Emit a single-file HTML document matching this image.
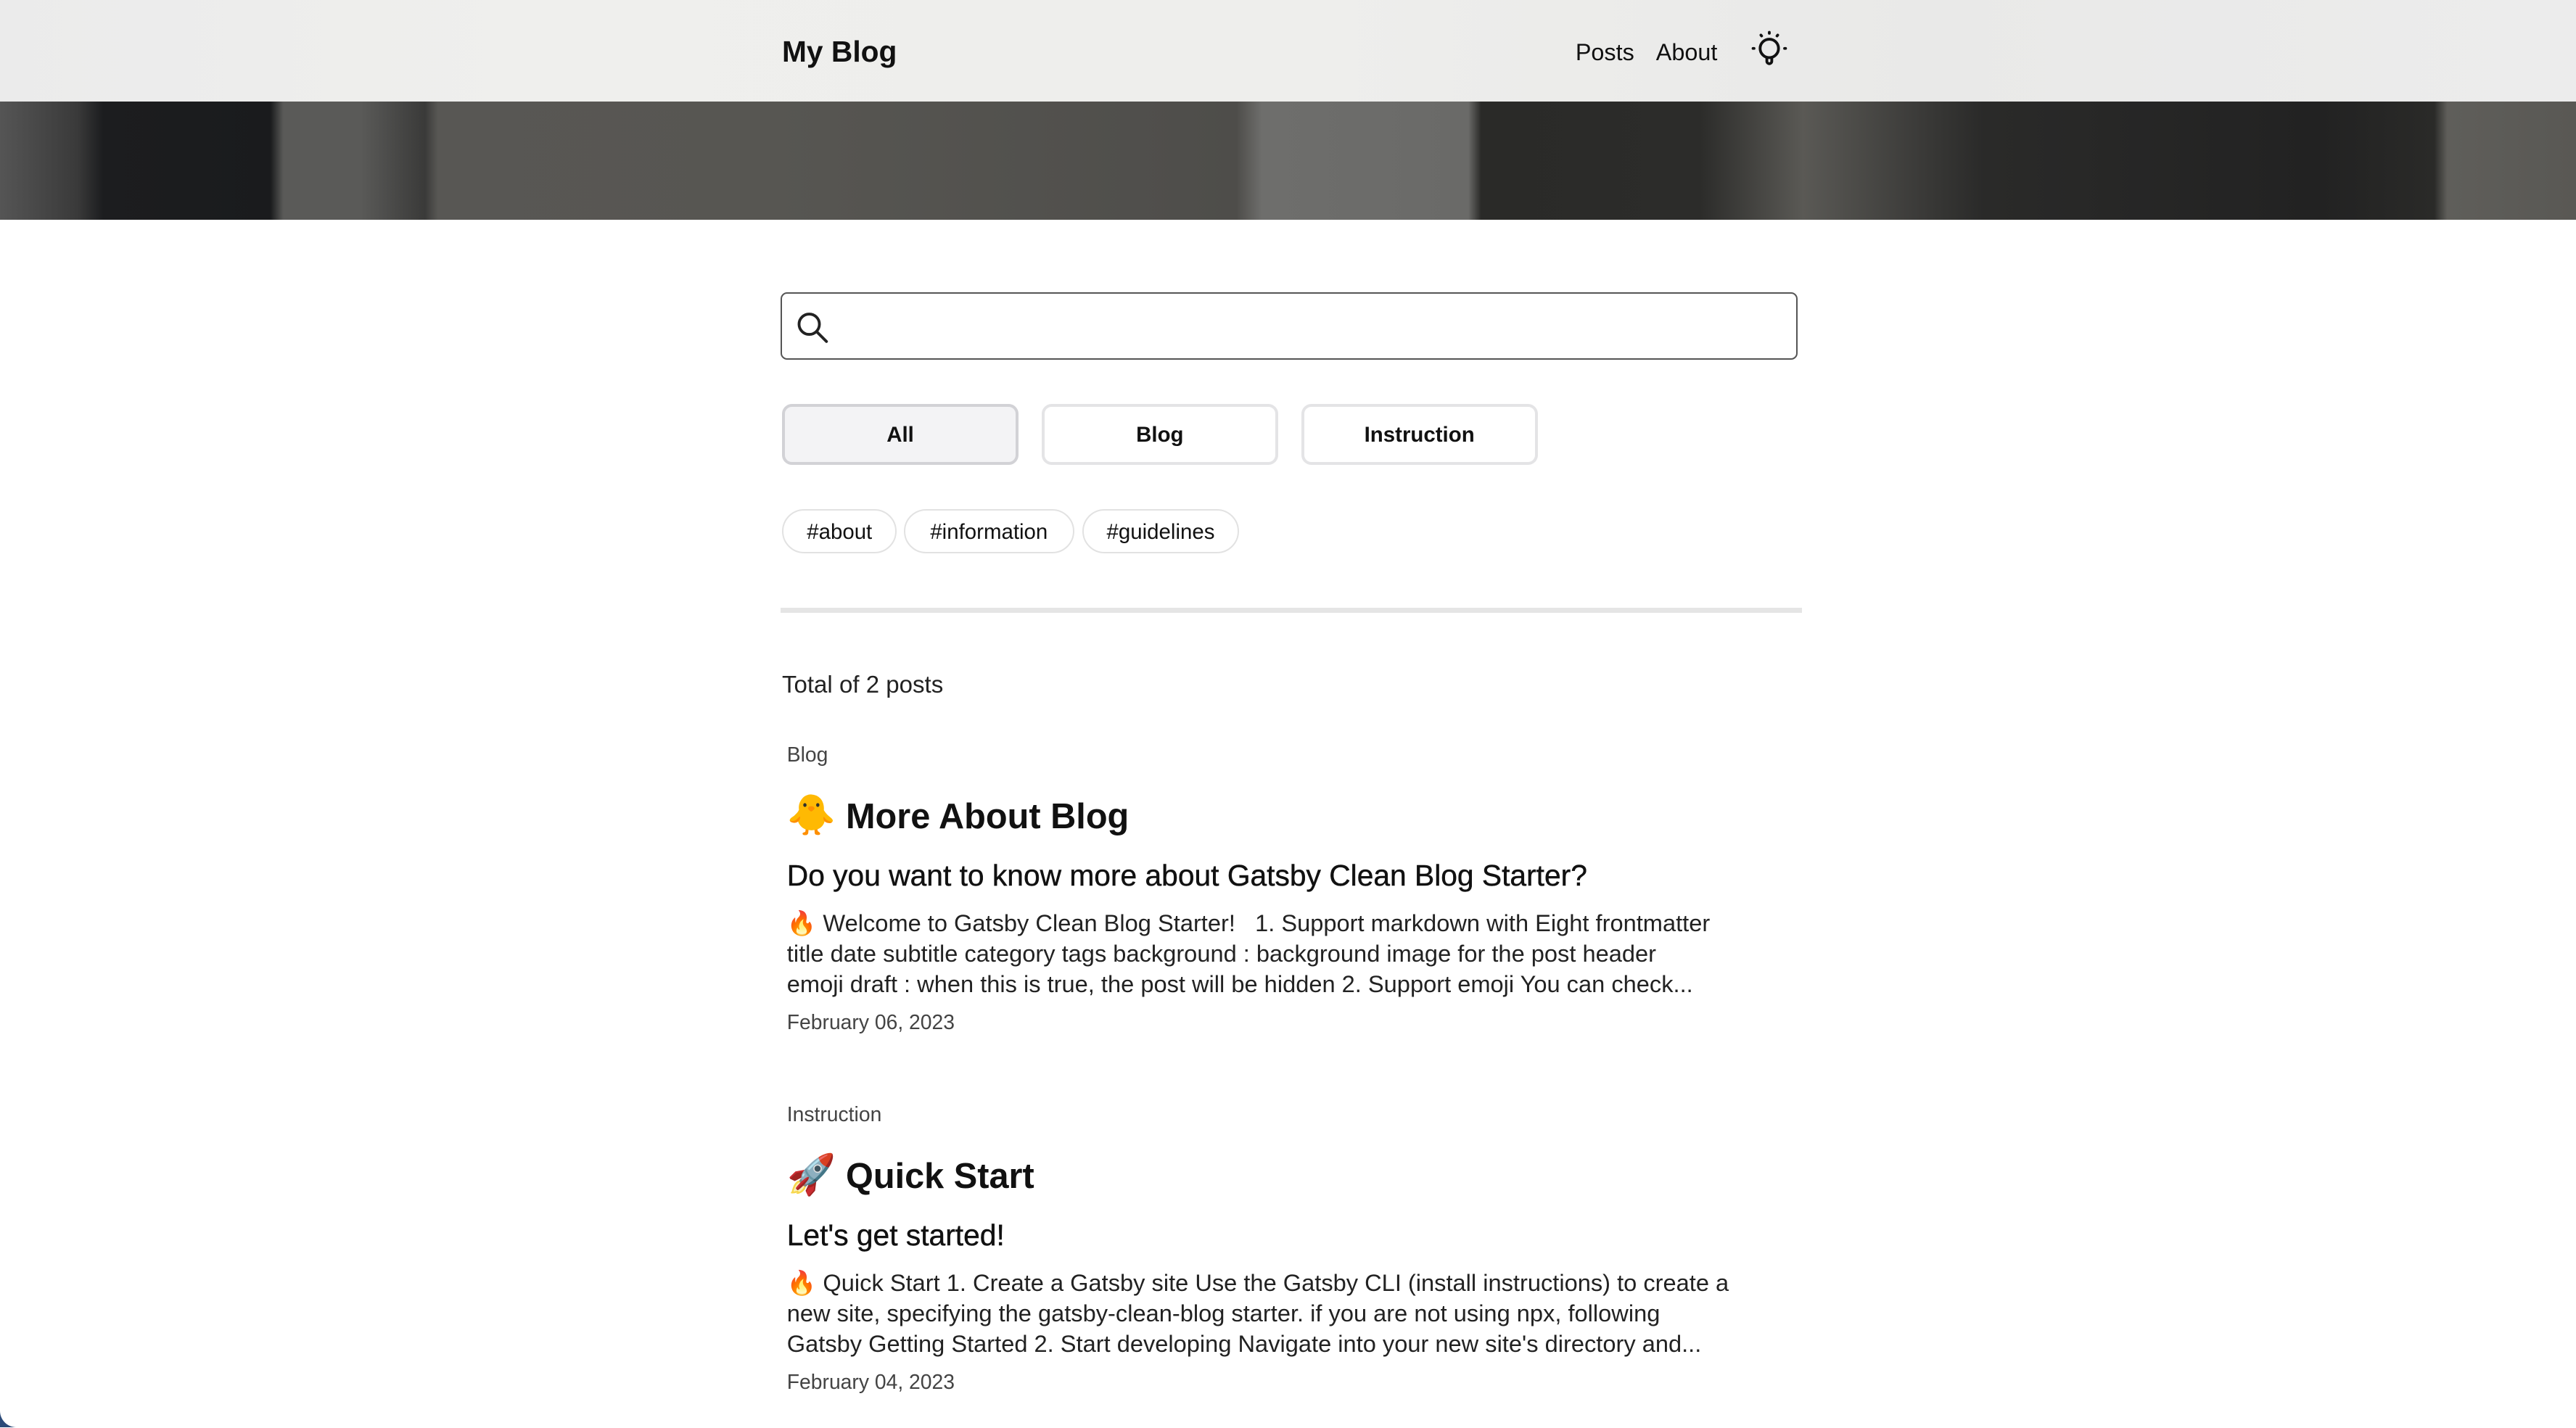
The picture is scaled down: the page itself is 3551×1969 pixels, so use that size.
<!DOCTYPE html>
<html><head><meta charset="utf-8">
<style>
html,body{margin:0;padding:0;background:#fff;overflow:hidden}
body{width:1568px;height:869px;zoom:2.26467;position:relative;font-family:"Liberation Sans","DejaVu Sans",sans-serif;color:#111}
.abs{position:absolute}
#hdr{left:0;top:0;width:1568px;height:62px;background:linear-gradient(90deg,#ebebeb 0%,#efefed 20%,#eeeeec 50%,#e9e9e8 75%,#ececec 100%);}
#hero{left:0;top:62px;width:1568px;height:72px;background:
linear-gradient(90deg,#555 0,#3a3a3a 3%,#1c1d1f 4%,#1a1b1d 10.5%,#5a5a58 11%,#5a5a58 14%,#3a3a39 16.5%,#585754 17%,#575652 30%,#4e4d4a 48%,#6e6e6c 49%,#6a6a68 57%,#2a2a28 57.5%,#2c2c2a 66%,#5a5955 70%,#2a2a29 77%,#222 90%,#2a2a28 94.5%,#5f5e5a 95%,#595854 100%);}
.btn{top:246px;height:37px;width:144px;border:2px solid #e4e4e6;border-radius:6px;box-sizing:border-box;font-size:13px;font-weight:bold;display:flex;align-items:center;justify-content:center;background:#fff;padding-top:1px}
.tag{top:310px;height:27px;border:1px solid #e2e2e2;border-radius:14px;box-sizing:border-box;font-size:13px;display:flex;align-items:center;justify-content:center;background:#fff;padding-top:1px}
.cat{font-size:12.5px;color:#444}
.ttl{font-size:21.5px;font-weight:600;color:#111;white-space:nowrap}
.sub{font-size:18px;color:#111;white-space:nowrap;-webkit-text-stroke:0.2px #111}
.ex{font-size:14.4px;line-height:18.4px;color:#222;white-space:nowrap}
.dt{font-size:12.5px;color:#444}
</style></head><body>
<div id="hdr" class="abs"></div>
<div id="hero" class="abs"></div>
<div class="abs" style="left:476px;top:21px;font-size:18px;font-weight:bold;color:#111">My Blog</div>
<div class="abs" style="left:959px;top:24px;font-size:14.3px;color:#111">Posts</div>
<div class="abs" style="left:1008px;top:24px;font-size:14.3px;color:#111">About</div>
<svg class="abs" style="left:1064px;top:17px" width="26" height="26" viewBox="0 0 26 26" fill="none" stroke="#111" stroke-width="1.7" stroke-linecap="round">
<circle cx="12.8" cy="12.7" r="5.6"/>
<path d="M11.3 18.2v2.3a1.5 1.5 0 0 0 3 0v-2.3"/>
<path d="M12.8 2.9v0.6M7.7 4.6l0.4 0.5M17.9 4.6l-0.4 0.5M2.9 12.7h0.6M22.1 12.7h0.6"/>
</svg>
<div class="abs" style="left:475px;top:178px;width:619px;height:41px;border:1px solid #555;border-radius:4px;box-sizing:border-box"></div>
<svg class="abs" style="left:483px;top:188px" width="24" height="24" viewBox="483 188 24 24" fill="none" stroke="#222" stroke-width="1.7" stroke-linecap="round">
<circle cx="492.5" cy="197.3" r="6.2"/><path d="M497 201.8l6 6"/></svg>
<div class="btn abs" style="left:476px;background:#f3f3f5;border-color:#d2d2d6">All</div>
<div class="btn abs" style="left:634px">Blog</div>
<div class="btn abs" style="left:792px">Instruction</div>
<div class="tag abs" style="left:476px;width:70px">#about</div>
<div class="tag abs" style="left:550px;width:104px">#information</div>
<div class="tag abs" style="left:659px;width:95px">#guidelines</div>
<div class="abs" style="left:475px;top:370px;width:622px;height:3px;background:#e5e5e5"></div>
<div class="abs" style="left:476px;top:409px;font-size:14.6px;color:#222">Total of 2 posts</div>

<div class="abs cat" style="left:479px;top:452px">Blog</div>
<div class="abs ttl" style="left:479px;top:482px"><span style="font-size:24px">🐥</span> More About Blog</div>
<div class="abs sub" style="left:479px;top:523px">Do you want to know more about Gatsby Clean Blog Starter?</div>
<div class="abs ex" style="left:479px;top:553px">🔥 Welcome to Gatsby Clean Blog Starter! &nbsp; 1. Support markdown with Eight frontmatter<br>title date subtitle category tags background : background image for the post header<br>emoji draft : when this is true, the post will be hidden 2. Support emoji You can check...</div>
<div class="abs dt" style="left:479px;top:615px">February 06, 2023</div>

<div class="abs cat" style="left:479px;top:671px">Instruction</div>
<div class="abs ttl" style="left:479px;top:701px"><span style="font-size:24px">🚀</span> Quick Start</div>
<div class="abs sub" style="left:479px;top:742px">Let's get started!</div>
<div class="abs ex" style="left:479px;top:772px">🔥 Quick Start 1. Create a Gatsby site Use the Gatsby CLI (install instructions) to create a<br>new site, specifying the gatsby-clean-blog starter. if you are not using npx, following<br>Gatsby Getting Started 2. Start developing Navigate into your new site's directory and...</div>
<div class="abs dt" style="left:479px;top:834px">February 04, 2023</div>
<div class="abs" style="left:0;top:858px;width:10px;height:11px;background:#2b4a78"></div>
<div class="abs" style="left:0;top:852px;width:22px;height:17px;background:#fff;border-bottom-left-radius:10px"></div>
</body></html>
